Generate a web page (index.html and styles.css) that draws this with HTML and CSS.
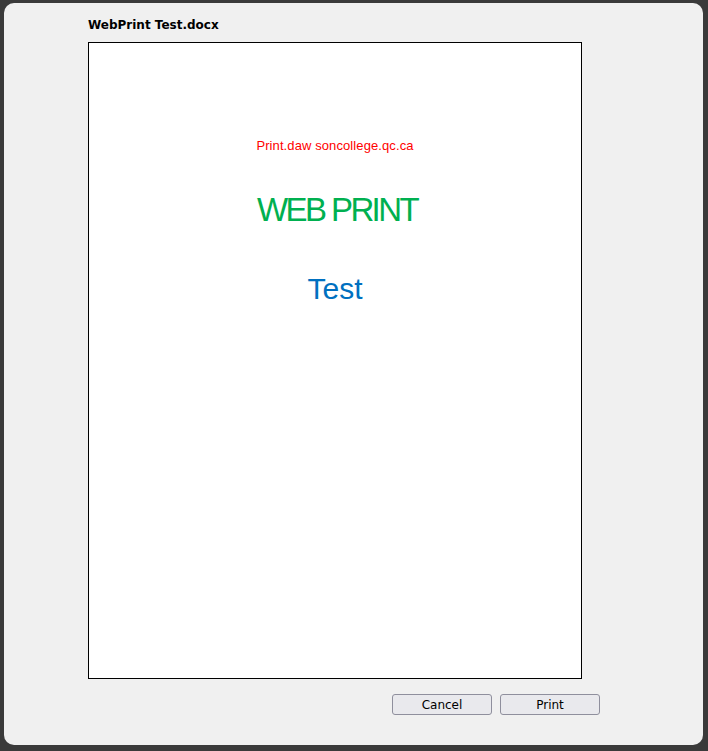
FILE: index.html
```html
<!DOCTYPE html>
<html lang="en">
<head>
    <meta charset="UTF-8">
    <title>WebPrint Test.docx</title>
    <link rel="stylesheet" href="styles.css">
</head>
<body>
    <div class="dialog">
        <h1 class="doc-title">WebPrint Test.docx</h1>

        <div class="preview">
            <p class="line-url">Print.daw soncollege.qc.ca</p>
            <p class="line-web">WEB PRINT</p>
            <p class="line-test">Test</p>
        </div>

        <div class="actions">
            <button class="btn">Cancel</button>
            <button class="btn">Print</button>
        </div>
    </div>
</body>
</html>
```

FILE: styles.css
```css
html, body {
    margin: 0;
    padding: 0;
}
body {
    background-color: #3a3a3a;
    font-family: "DejaVu Sans", Verdana, sans-serif;
    width: 708px;
    height: 751px;
    overflow: hidden;
}
.dialog {
    margin: 3px 5px 0 4px;
    height: 742px;
    box-sizing: border-box;
    background-color: #f0f0f0;
    border-radius: 10px;
    padding: 13px 0 0 84px;
}
.doc-title {
    margin: 0;
    font-size: 12px;
    font-weight: bold;
    color: #000;
    line-height: 18px;
    height: 26px;
}
.preview {
    width: 494px;
    height: 637px;
    box-sizing: border-box;
    border: 1px solid #000;
    background-color: #fff;
    font-family: "Liberation Sans", Arial, sans-serif;
    text-align: center;
    padding-top: 94px;
}
.preview p {
    margin: 0;
}
.line-url {
    color: #ff0000;
    font-size: 13px;
    line-height: 18px;
    letter-spacing: 0.1px;
}
.line-web {
    color: #00b050;
    font-size: 33px;
    line-height: 40px;
    letter-spacing: -2.6px;
    padding-left: 4px;
    margin-top: 35px !important;
}
.line-test {
    color: #0070c0;
    font-size: 30px;
    line-height: 36px;
    margin-top: 41px !important;
}
.actions {
    display: flex;
    gap: 8px;
    padding: 15px 0 0 304px;
}
.btn {
    width: 100px;
    height: 21px;
    box-sizing: border-box;
    border: 1px solid #8f8f9d;
    border-radius: 3px;
    background-color: #e9e9ed;
    font-family: "DejaVu Sans", Verdana, sans-serif;
    font-size: 12px;
    color: #000;
    padding: 0;
}
```
